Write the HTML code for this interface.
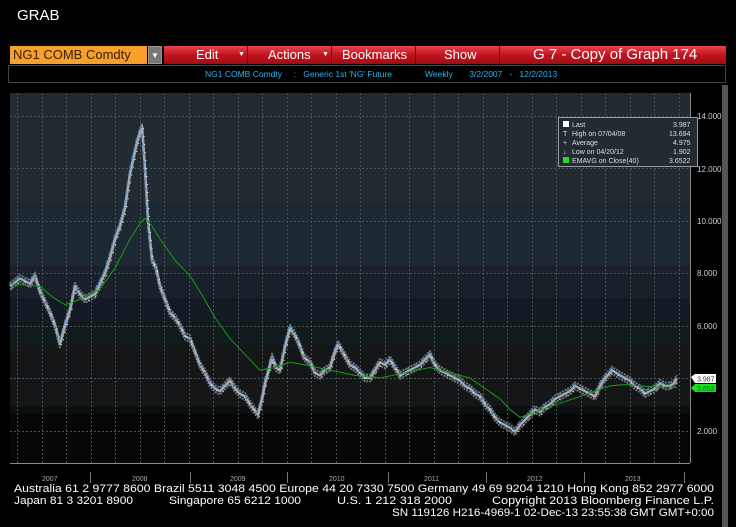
<!DOCTYPE html>
<html><head><meta charset="utf-8"><style>
body{margin:0;width:736px;height:527px;background:#000;overflow:hidden;position:relative;font-family:"Liberation Sans",sans-serif}
.a{position:absolute;white-space:pre}
.tb{position:absolute;top:46px;height:18px;color:#fff;font-size:13px;line-height:18px}
</style></head><body>
<div class="a" style="left:17px;top:7px;color:#fff;font-size:15px">GRAB</div>
<div class="tb" style="left:10px;width:137px;background:#f7a02d;color:#3a2000;padding-left:3px;box-sizing:border-box;font-size:13px">NG1 COMB Comdty</div>
<div class="tb" style="left:148px;width:14px;background:#777;border:1px solid #999;box-sizing:border-box;text-align:center;font-size:8px">▼</div>
<div class="tb" style="left:164px;width:562px;background:linear-gradient(#e8434c,#c0141e 50%,#a00c16)"></div>
<div class="tb" style="left:247px;width:1px;background:#6a0a10"></div>
<div class="tb" style="left:331px;width:1px;background:#6a0a10"></div>
<div class="tb" style="left:415px;width:1px;background:#6a0a10"></div>
<div class="tb" style="left:499px;width:1px;background:#6a0a10"></div>
<div class="tb" style="left:196px">Edit</div>
<div class="tb" style="left:238px;font-size:7px">▼</div>
<div class="tb" style="left:268px">Actions</div>
<div class="tb" style="left:322px;font-size:7px">▼</div>
<div class="tb" style="left:342px">Bookmarks</div>
<div class="tb" style="left:444px">Show</div>
<div class="tb" style="left:533px;font-size:15px">G 7 - Copy of Graph 174</div>
<div class="a" style="left:8px;top:65px;width:718px;height:18px;border:1px solid #444;box-sizing:border-box"></div>
<div class="a" style="left:205px;top:69px;color:#2fb0ec;font-size:8.5px">NG1 COMB Comdty     :   Generic 1st 'NG' Future              Weekly       3/2/2007   -   12/2/2013</div>
<div class="a" style="left:722px;top:85px;width:6px;height:442px;background:#555"></div>
<svg class="a" style="left:0;top:0" width="736" height="527">
<defs>
<polyline id="p" vector-effect="non-scaling-stroke" points="10,7.5 20,7.8 30,7.6 35,7.9 40,7.3 45,6.9 50,6.5 55,6 60,5.3 65,6.0 70,6.6 75,7.5 80,7.2 85,7.0 95,7.2 100,7.6 105,8.0 110,8.6 115,9.3 120,9.8 125,10.5 130,11.8 137,13.0 142,13.6 145,12 148,10 152,8.5 156,8.2 160,7.5 165,7.0 170,6.5 175,6.3 180,6.0 185,5.6 190,5.5 195,5.0 200,4.5 205,4.2 210,3.8 215,3.6 220,3.5 225,3.7 230,3.9 235,3.6 240,3.4 245,3.3 250,3.0 254,2.8 258,2.6 262,3.2 265,3.8 268,4.2 272,4.8 276,4.4 280,4.3 285,5.2 290,5.9 294,5.7 298,5.4 304,4.8 310,4.6 315,4.2 320,4.1 325,4.3 330,4.4 334,4.9 338,5.3 344,4.9 350,4.5 355,4.4 360,4.2 365,4.0 370,4.0 375,4.3 380,4.6 385,4.5 390,4.7 395,4.4 400,4.1 405,4.2 410,4.3 415,4.4 420,4.5 425,4.7 430,4.9 435,4.5 440,4.3 445,4.2 450,4.1 455,4.0 460,3.9 465,3.7 470,3.6 475,3.4 480,3.3 485,3.0 490,2.8 495,2.5 500,2.3 505,2.2 510,2.1 515,1.95 520,2.2 525,2.4 530,2.6 535,2.8 540,2.7 545,2.9 550,3.0 555,3.2 560,3.3 565,3.4 570,3.5 575,3.7 580,3.6 585,3.5 590,3.4 595,3.3 600,3.7 605,4.0 610,4.2 612,4.3 616,4.2 620,4.1 625,4.0 630,3.9 635,3.7 640,3.6 645,3.4 650,3.5 655,3.6 660,3.8 665,3.7 670,3.7 674,3.8 677,3.99"/>
</defs>
<rect x="10" y="93" width="680" height="109" fill="#222b32"/>
<rect x="10" y="202" width="680" height="64" fill="#1c2932"/>
<rect x="10" y="266" width="680" height="32" fill="#1a202a"/>
<rect x="10" y="298" width="680" height="24" fill="#141a23"/>
<rect x="10" y="322" width="680" height="24" fill="#111a1c"/>
<rect x="10" y="346" width="680" height="60" fill="#141617"/>
<rect x="10" y="406" width="680" height="8" fill="#0c0f10"/>
<rect x="10" y="414" width="680" height="49" fill="#060606"/>
<g stroke="#4a5258" stroke-width="1" stroke-dasharray="2,2">
<line x1="10" x2="690" y1="116.5" y2="116.5"/><line x1="10" x2="690" y1="168.5" y2="168.5"/><line x1="10" x2="690" y1="221.5" y2="221.5"/><line x1="10" x2="690" y1="273.5" y2="273.5"/><line x1="10" x2="690" y1="326.5" y2="326.5"/><line x1="10" x2="690" y1="378.5" y2="378.5"/><line x1="10" x2="690" y1="431.5" y2="431.5"/>
<line y1="93" y2="463" x1="17.5" x2="17.5"/><line y1="93" y2="463" x1="42.5" x2="42.5"/><line y1="93" y2="463" x1="66.5" x2="66.5"/><line y1="93" y2="463" x1="91.5" x2="91.5"/><line y1="93" y2="463" x1="115.5" x2="115.5"/><line y1="93" y2="463" x1="140.5" x2="140.5"/><line y1="93" y2="463" x1="164.5" x2="164.5"/><line y1="93" y2="463" x1="189.5" x2="189.5"/><line y1="93" y2="463" x1="213.5" x2="213.5"/><line y1="93" y2="463" x1="238.5" x2="238.5"/><line y1="93" y2="463" x1="262.5" x2="262.5"/><line y1="93" y2="463" x1="287.5" x2="287.5"/><line y1="93" y2="463" x1="311.5" x2="311.5"/><line y1="93" y2="463" x1="336.5" x2="336.5"/><line y1="93" y2="463" x1="360.5" x2="360.5"/><line y1="93" y2="463" x1="385.5" x2="385.5"/><line y1="93" y2="463" x1="409.5" x2="409.5"/><line y1="93" y2="463" x1="434.5" x2="434.5"/><line y1="93" y2="463" x1="458.5" x2="458.5"/><line y1="93" y2="463" x1="483.5" x2="483.5"/><line y1="93" y2="463" x1="507.5" x2="507.5"/><line y1="93" y2="463" x1="532.5" x2="532.5"/><line y1="93" y2="463" x1="556.5" x2="556.5"/><line y1="93" y2="463" x1="581.5" x2="581.5"/><line y1="93" y2="463" x1="605.5" x2="605.5"/><line y1="93" y2="463" x1="630.5" x2="630.5"/><line y1="93" y2="463" x1="654.5" x2="654.5"/><line y1="93" y2="463" x1="679.5" x2="679.5"/>
</g>
<line x1="10" x2="690" y1="463.5" y2="463.5" stroke="#888"/>
<line x1="690.5" x2="690.5" y1="93" y2="463" stroke="#888"/>
<g transform="translate(0,116) scale(1,-26.2) translate(0,-14)" fill="none" stroke-linejoin="round">
<use href="#p" transform="translate(0,0.13)" stroke="#6f757a" stroke-width="2" stroke-dasharray="2,1"/>
<use href="#p" transform="translate(0,-0.13)" stroke="#6f757a" stroke-width="2" stroke-dasharray="2,1"/>
<use href="#p" stroke="#a3a8ac" stroke-width="2.5"/>
<use href="#p" transform="translate(1.5,-0.08)" stroke="#fff" stroke-width="1" stroke-dasharray="1,7"/>
<use href="#p" transform="translate(-1,0.08)" stroke="#2a80d8" stroke-width="1.3" stroke-dasharray="3,6"/>
<polyline vector-effect="non-scaling-stroke" stroke="#1a9a1a" stroke-width="1" points="10,7.6 25,7.55 40,7.5 52,7.1 65,6.8 80,7.0 100,7.4 115,8.2 130,9.3 140,9.9 145,10.1 152,9.8 160,9.3 175,8.5 190,7.9 200,7.3 215,6.3 230,5.5 245,4.9 260,4.3 275,4.4 290,4.6 305,4.5 330,4.3 355,4.1 380,4.0 405,4.2 430,4.4 450,4.2 470,4.0 485,3.6 500,3.2 510,2.8 520,2.5 535,2.7 550,2.9 565,3.1 580,3.3 595,3.5 610,3.7 625,3.75 640,3.7 660,3.65 677,3.65"/>
</g>
<g fill="#ccc" font-size="8" font-family="Liberation Sans,sans-serif">
<text x="697" y="119">14.000</text><text x="697" y="172">12.000</text><text x="697" y="224">10.000</text><text x="697" y="276">8.000</text><text x="697" y="329">6.000</text><text x="697" y="434">2.000</text>
</g>
<polygon points="691,377 695,374 716,374 716,383 695,383" fill="#fff"/>
<text x="697" y="381.5" font-size="7" fill="#333">3.987</text>
<polygon points="691,388 695,384 716,384 716,392 695,392" fill="#19e019"/>
<text x="697" y="391" font-size="7" fill="#064">3.652</text>
<rect x="558.5" y="117.5" width="139" height="49" fill="#222b32" stroke="#999"/>
<g fill="#ddd" font-size="7">
<rect x="563" y="121" width="6" height="6" fill="#fff"/><text x="572" y="127">Last</text><text x="673" y="127">3.987</text>
<text x="563" y="136">T</text><text x="572" y="136">High on 07/04/08</text><text x="669" y="136">13.694</text>
<text x="563" y="145">+</text><text x="572" y="145">Average</text><text x="673" y="145">4.975</text>
<text x="563" y="154">↓</text><text x="572" y="154">Low on 04/20/12</text><text x="673" y="154">1.902</text>
<rect x="563" y="157" width="6" height="6" fill="#1ee01e"/><text x="572" y="163">EMAVG on Close(40)</text><text x="669" y="163">3.6522</text>
</g>
<g fill="#aaa" font-size="7">
<text x="42" y="481">2007</text><text x="132" y="481">2008</text><text x="230" y="481">2009</text><text x="329" y="481">2010</text><text x="424" y="481">2011</text><text x="527" y="481">2012</text><text x="625" y="481">2013</text>
</g>
<g stroke="#777"><line x1="90.5" x2="90.5" y1="472" y2="483"/><line x1="190.5" x2="190.5" y1="472" y2="483"/><line x1="287.5" x2="287.5" y1="472" y2="483"/><line x1="388.5" x2="388.5" y1="472" y2="483"/><line x1="486.5" x2="486.5" y1="472" y2="483"/><line x1="584.5" x2="584.5" y1="472" y2="483"/><line x1="684.5" x2="684.5" y1="472" y2="483"/></g>
<g fill="#fff" font-size="11" font-family="Liberation Sans,sans-serif">
<text x="14" y="492" textLength="700" lengthAdjust="spacingAndGlyphs">Australia 61 2 9777 8600 Brazil 5511 3048 4500 Europe 44 20 7330 7500 Germany 49 69 9204 1210 Hong Kong 852 2977 6000</text>
<text x="14" y="504" textLength="119" lengthAdjust="spacingAndGlyphs">Japan 81 3 3201 8900</text>
<text x="169" y="504" textLength="132" lengthAdjust="spacingAndGlyphs">Singapore 65 6212 1000</text>
<text x="337" y="504" textLength="115" lengthAdjust="spacingAndGlyphs">U.S. 1 212 318 2000</text>
<text x="492" y="504" textLength="222" lengthAdjust="spacingAndGlyphs">Copyright 2013 Bloomberg Finance L.P.</text>
<text x="392" y="516" textLength="322" lengthAdjust="spacingAndGlyphs">SN 119126 H216-4969-1 02-Dec-13 23:55:38 GMT  GMT+0:00</text>
</g>
</svg>
</body></html>
